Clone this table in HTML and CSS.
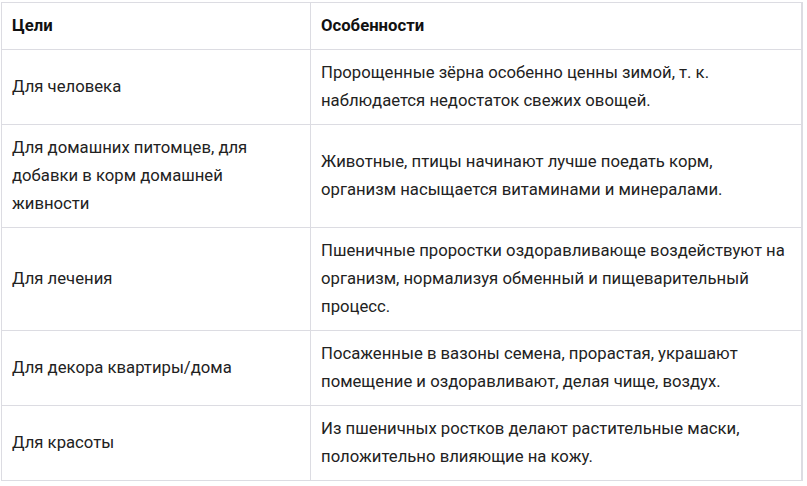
FILE: index.html
```html
<!DOCTYPE html>
<html lang="ru">
<head>
<meta charset="utf-8">
<link rel="stylesheet" href="styles.css">
</head>
<body>
<table class="goals">
  <colgroup><col class="c1"><col class="c2"></colgroup>
  <thead>
    <tr><th>Цели</th><th>Особенности</th></tr>
  </thead>
  <tbody>
    <tr><td>Для человека</td><td>Пророщенные зёрна особенно ценны зимой, т. к. наблюдается недостаток свежих овощей.</td></tr>
    <tr><td>Для домашних питомцев, для добавки в корм домашней живности</td><td>Животные, птицы начинают лучше поедать корм, организм насыщается витаминами и минералами.</td></tr>
    <tr><td>Для лечения</td><td>Пшеничные проростки оздоравливающе воздействуют на организм, нормализуя обменный и пищеварительный процесс.</td></tr>
    <tr><td>Для декора квартиры/дома</td><td>Посаженные в вазоны семена, прорастая, украшают помещение и оздоравливают, делая чище, воздух.</td></tr>
    <tr><td>Для красоты</td><td>Из пшеничных ростков делают растительные маски, положительно влияющие на кожу.</td></tr>
  </tbody>
</table>
</body>
</html>
```
FILE: styles.css
```css
html, body { margin: 0; padding: 0; background: #fff; }
body { padding: 2px 0 0 1px; font-family: Roboto, "Liberation Sans", sans-serif; color: #222; }
.goals { border-collapse: collapse; width: 802px; table-layout: fixed; font-size: 16.7px; line-height: 28px; border-right: 2px solid #dcdce2; }
.c1 { width: 309px; }
.goals th, .goals td { border: 1px solid #dcdce2; padding: 9px 10px; text-align: left; vertical-align: middle; }
.goals th { font-weight: 700; color: #111; }
.goals td:last-child { padding-right: 10px; }
```
